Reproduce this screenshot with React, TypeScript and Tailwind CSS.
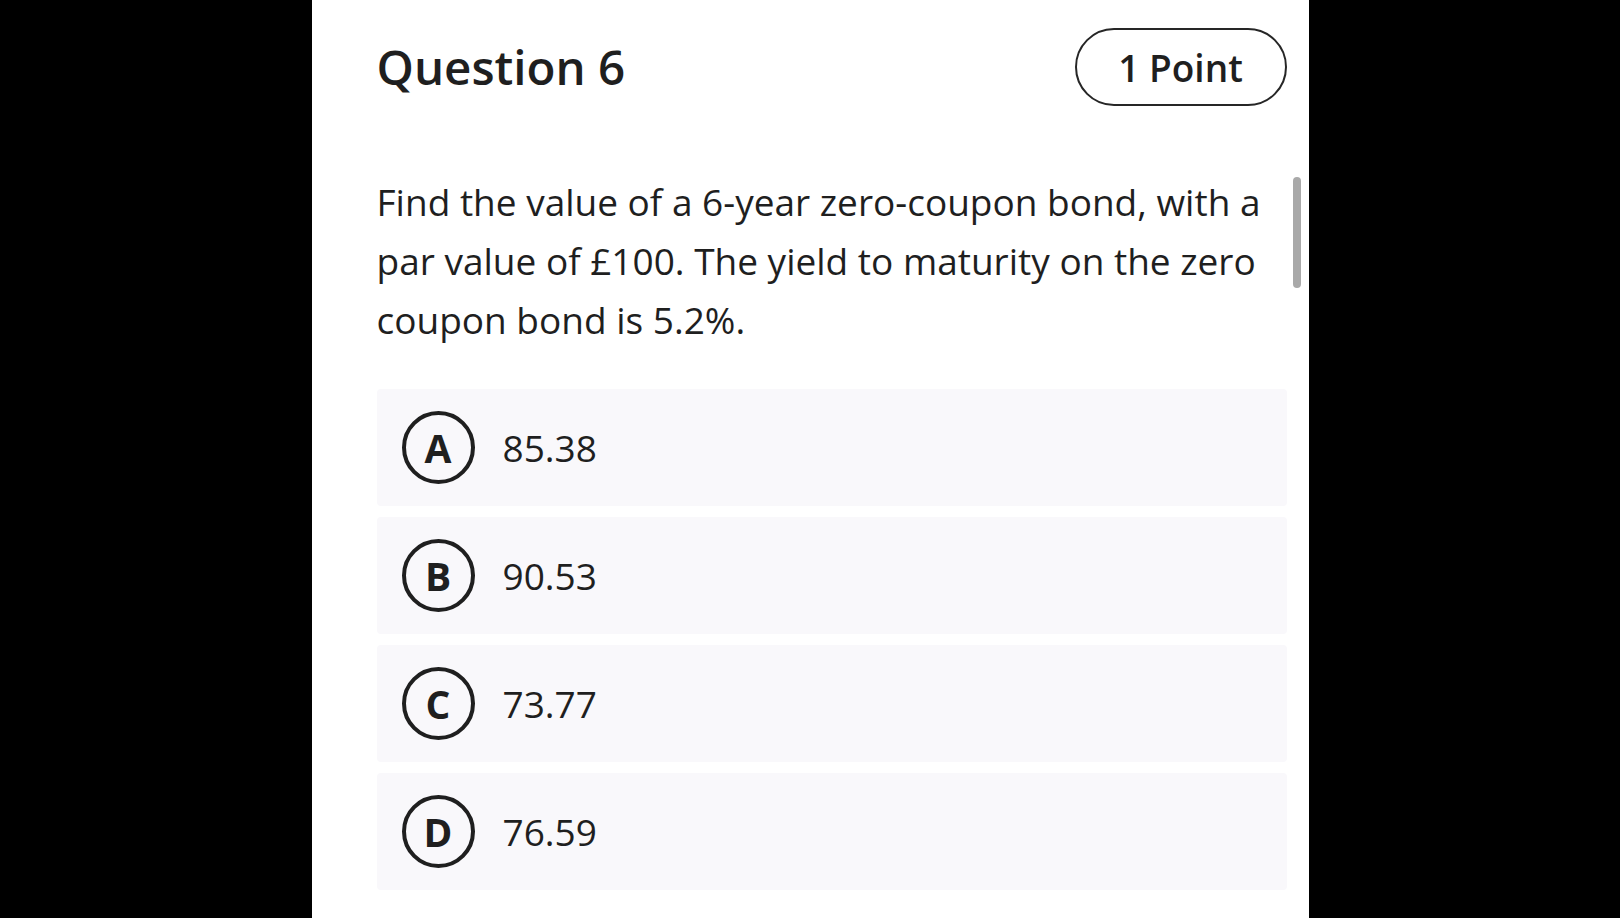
import React from "react";

const options = [
  { letter: "A", value: "85.38" },
  { letter: "B", value: "90.53" },
  { letter: "C", value: "73.77" },
  { letter: "D", value: "76.59" },
];

export default function App() {
  return (
    <div
      className="w-full h-[918px] bg-black flex justify-center overflow-hidden"
      style={{ fontFamily: '"Open Sans", "Noto Sans", sans-serif' }}
    >
      <div className="relative w-[997px] h-full bg-white pl-[65px] pr-[22px] pt-[28px] text-[#1f1f1f]">
        <div className="flex items-center justify-between">
          <h1 className="text-[47.5px] leading-none font-semibold">Question 6</h1>
          <div className="w-[212px] h-[78px] rounded-full border-2 border-[#262626] flex items-center justify-center text-[37px] font-semibold leading-none">
            1 Point
          </div>
        </div>
        <p className="mt-[66px] text-[37px] leading-[59px] pr-[10px]">
          Find the value of a 6-year zero-coupon bond, with a par value of £100. The yield to maturity on the zero coupon bond is 5.2%.
        </p>
        <div className="mt-[40px] flex flex-col gap-[11px]">
          {options.map((o) => (
            <div
              key={o.letter}
              className="h-[117px] rounded-[4px] bg-[#f9f8fb] flex items-center pl-[25px] gap-[28px]"
            >
              <div className="w-[73px] h-[73px] rounded-full border-4 border-[#1f1f1f] flex items-center justify-center text-[39px] font-bold leading-none">
                {o.letter}
              </div>
              <span className="text-[37px] leading-none">{o.value}</span>
            </div>
          ))}
        </div>
        <div className="absolute left-[981px] top-[177px] w-[8px] h-[111px] rounded-full bg-[#a9a9a9]" />
      </div>
    </div>
  );
}
